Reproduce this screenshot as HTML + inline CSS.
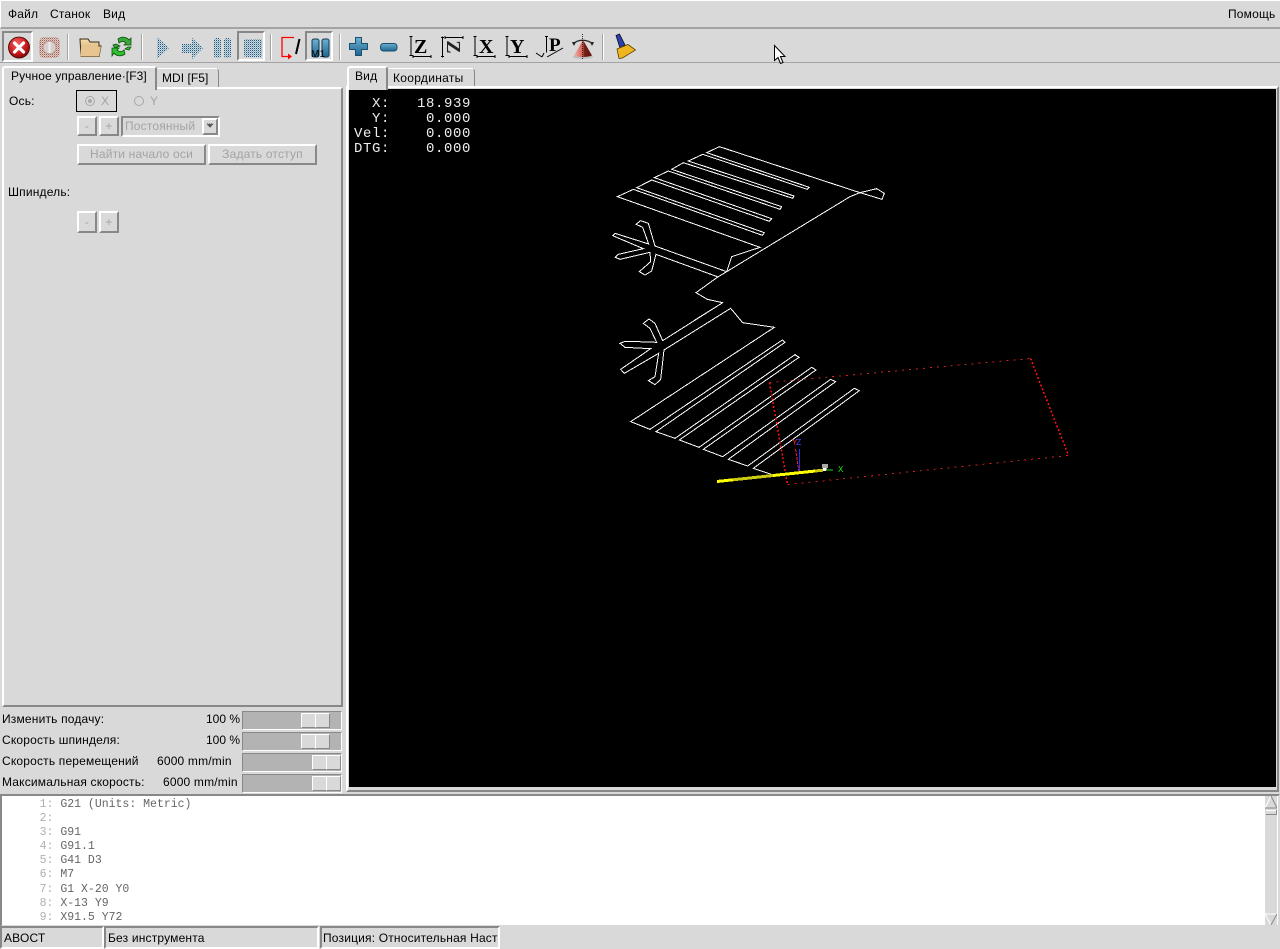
<!DOCTYPE html>
<html lang="ru"><head><meta charset="utf-8"><title>AXIS</title>
<style>
html,body{margin:0;padding:0;background:#d9d9d9;}
body{width:1280px;height:949px;overflow:hidden;position:relative;font:12px "Liberation Sans",sans-serif;letter-spacing:.18px;color:#000;}
.a{position:absolute;box-sizing:border-box;white-space:nowrap;}
.t{position:absolute;white-space:pre;line-height:14px;}
.btn{position:absolute;box-sizing:border-box;border:2px solid;border-color:#fff #888 #888 #fff;color:#a3a3a3;text-align:center;background:#d9d9d9;}
.sep{position:absolute;top:34px;width:2px;height:26px;background:linear-gradient(90deg,#a3a3a3 50%,#fff 50%);}
.tr{position:absolute;box-sizing:border-box;left:242px;width:100px;height:19px;background:#b3b3b3;border:1px solid;border-color:#888 #fff #fff #888;}
.th{position:absolute;box-sizing:border-box;top:1px;width:15px;height:15px;background:#d9d9d9;border:1px solid;border-color:#fff #888 #888 #fff;}
#code{position:absolute;left:12px;top:798px;font:11.5px/14.1px "Liberation Mono",monospace;letter-spacing:0;white-space:pre;color:#666;}
#code i{font-style:normal;color:#b0b0b0;}
#dro{position:absolute;left:354px;top:97px;font:14px/15px "Liberation Mono",monospace;letter-spacing:.6px;color:#eee;white-space:pre;}
</style></head><body>

<!-- menu -->
<div class="a" style="left:0;top:0;width:1280px;height:29px;border-top:1px solid #fff;border-left:1px solid #fff;border-bottom:2px solid #a3a3a3"></div>
<div class="t" style="left:8px;top:7px">Файл</div>
<div class="t" style="left:50px;top:7px">Станок</div>
<div class="t" style="left:103px;top:7px">Вид</div>
<div class="t" style="left:1228px;top:7px">Помощь</div>
<div class="a" style="left:0;top:62px;width:1280px;height:1px;background:#a3a3a3"></div>

<!-- toolbar -->
<div class="a" style="left:2px;top:31px;width:31px;height:31px;border:2px solid;border-color:#888 #fff #fff #888"></div>
<div class="a" style="left:237px;top:31px;width:28px;height:30px;border:2px solid;border-color:#888 #fff #fff #888"></div>
<div class="a" style="left:305px;top:31px;width:28px;height:30px;border:2px solid;border-color:#888 #fff #fff #888"></div>
<div class="sep" style="left:67px"></div><div class="sep" style="left:141px"></div><div class="sep" style="left:270px"></div><div class="sep" style="left:602px"></div>
<div class="sep" style="left:339px"></div>

<svg class="a" style="left:0;top:0" width="1280" height="64" viewBox="0 0 1280 64">
<defs>
<pattern id="chk" width="2" height="2" patternUnits="userSpaceOnUse"><rect width="2" height="2" fill="#d0d8dc"/><rect width="1" height="1" fill="#1d5a80"/><rect x="1" y="1" width="1" height="1" fill="#8fb0c4"/></pattern>
<pattern id="chkr" width="2" height="2" patternUnits="userSpaceOnUse"><rect width="2" height="2" fill="#d9d0cc"/><rect width="1" height="1" fill="#a5584c"/><rect x="1" y="1" width="1" height="1" fill="#c9a090"/></pattern>
<radialGradient id="rd" cx=".4" cy=".3" r=".8"><stop offset="0" stop-color="#f26060"/><stop offset=".6" stop-color="#c81818"/><stop offset="1" stop-color="#700"/></radialGradient>
<linearGradient id="fd" x1="0" y1="0" x2="0" y2="1"><stop offset="0" stop-color="#f5dcae"/><stop offset="1" stop-color="#c99c5e"/></linearGradient>
<linearGradient id="bl" x1="0" y1="0" x2="0" y2="1"><stop offset="0" stop-color="#6fb0d0"/><stop offset="1" stop-color="#1d6590"/></linearGradient>
<linearGradient id="cn" x1="0" y1="0" x2="1" y2="0"><stop offset="0" stop-color="#f5b0a8"/><stop offset=".5" stop-color="#d06058"/><stop offset=".55" stop-color="#7a2018"/><stop offset="1" stop-color="#5a100c"/></linearGradient>
</defs>
<!-- estop -->
<circle cx="19" cy="47.5" r="10.5" fill="url(#rd)" stroke="#300" stroke-width=".8"/>
<path d="M14.5 43l9 9M23.5 43l-9 9" stroke="#fff" stroke-width="3.2" stroke-linecap="round"/>
<!-- power -->
<rect x="39" y="37" width="21" height="21" rx="5" fill="url(#chkr)"/>
<circle cx="49.5" cy="47.5" r="6.500" fill="#d6cfcb" stroke="#b99"/><path d="M49.5 42v11" stroke="#eee" stroke-width="2"/>
<!-- folder -->
<path d="M80 39h8l2 3h9v4h2l-2 10.500H81z" fill="url(#fd)" stroke="#3a2a10"/>
<path d="M81 46.500h20l-2 10H80.500z" fill="#e8c58e"/>
<!-- reload -->
<path d="M118 39c4-3 9-2 11 1l2-2v7h-7l2-2c-2-2-5-2-7 0z" fill="#3aa83a" stroke="#0d520d" stroke-width=".8"/>
<path d="M113 45l3-1 4 2-5 2z" fill="#3aa83a" stroke="#0d520d" stroke-width=".8"/>
<path d="M125 54c-4 3-9 2-11-1l-2 3v-8h7l-2 2c2 2 5 2 7 0z" fill="#2fc02f" stroke="#0d520d" stroke-width=".8"/>
<path d="M131 47l-2 3-4-1 3-2z" fill="#2fc02f" stroke="#0d520d" stroke-width=".8"/>
<!-- play -->
<path d="M157 37l12 11-12 11z" fill="url(#chk)"/>
<!-- step -->
<path d="M182 44h10v-6l11 10-11 11v-6h-10z" fill="url(#chk)"/>
<!-- pause -->
<rect x="214" y="38" width="7" height="20" rx="2.500" fill="url(#chk)"/><rect x="224" y="38" width="7" height="20" rx="2.500" fill="url(#chk)"/>
<!-- stop -->
<rect x="244" y="39" width="18" height="18" rx="2" fill="url(#chk)"/>
<!-- block delete -->
<path d="M294 37.500h-12v19h9" fill="none" stroke="#f00" stroke-width="1.300"/><path d="M288 53.500l4 3-4 3z" fill="#f00"/>
<path d="M296 54l3.500-15" stroke="#000" stroke-width="2"/>
<!-- m1 -->
<rect x="312" y="39" width="7" height="18" rx="2" fill="url(#bl)" stroke="#0c3b55"/><rect x="322" y="39" width="7" height="18" rx="2" fill="url(#bl)" stroke="#0c3b55"/>
<text x="311" y="57" font-family="Liberation Sans,sans-serif" font-size="10" fill="#000">M1</text>
<!-- plus -->
<path d="M356 38h6v6h6v6h-6v6h-6v-6h-6v-6h6z" fill="url(#bl)" stroke="#184f70" stroke-linejoin="round" transform="translate(-.5,-.5)"/>
<!-- minus -->
<rect x="380.500" y="43.500" width="16.500" height="7.500" rx="3" fill="url(#bl)" stroke="#184f70"/>
<!-- view Z -->
<g fill="none" stroke="#000"><path d="M409.500 36.500h3M411 36.500v19M409.500 55.500h3M413 56.500h18M413 55v3M431 55v3"/></g>
<text x="414" y="53" font-family="Liberation Serif,serif" font-size="20" font-weight="700">Z</text>
<!-- view N (rotated Z) -->
<g fill="none" stroke="#000"><path d="M442.500 36.500v21M441 37.500h3M441 56.500h3M445 37.500h18M445 36v3M463 36v3"/></g>
<text transform="translate(453,47) rotate(90)" x="0" y="6" text-anchor="middle" font-family="Liberation Serif,serif" font-size="20" font-weight="700" fill="#222">Z</text>
<!-- view X -->
<g fill="none" stroke="#000"><path d="M473.500 36.500h3M475 36.500v19M473.500 55.500h3M477 56.500h18M477 55v3M495 55v3"/></g>
<text x="479" y="53" font-family="Liberation Serif,serif" font-size="20" font-weight="700">X</text>
<!-- view Y -->
<g fill="none" stroke="#000"><path d="M505.500 36.500h3M507 36.500v19M505.500 55.500h3M509 56.500h18M509 55v3M527 55v3"/></g>
<text x="510" y="53" font-family="Liberation Serif,serif" font-size="20" font-weight="700">Y</text>
<!-- view P -->
<g fill="none" stroke="#000"><path d="M546.500 36.500v16M545 36.500h3M536 53l6 4M542 57l2-4M547 57l16-9"/></g>
<text x="549" y="51" font-family="Liberation Serif,serif" font-size="19" font-weight="700">P</text>
<!-- rotate cone -->
<path d="M573 44c5-5 14-5 20 0" fill="none" stroke="#222" stroke-width="1.200"/><path d="M572 42l4 0-2 4zM594 42l-4 0 2 4z" fill="#222"/>
<ellipse cx="583" cy="56.500" rx="10" ry="2.500" fill="#aaa" opacity=".6"/>
<path d="M583 40l9 15.500c-5 2-13 2-18 0z" fill="url(#cn)"/>
<path d="M582.500 34v26" stroke="#000" stroke-width=".8" stroke-dasharray="1 1"/>
<!-- clear -->
<path d="M616 35.500l3.500-1.500 5.500 11-5 3z" fill="#2b3fb0" stroke="#111" stroke-width=".8"/>
<path d="M617 49l11-4.500 7.500 5.500-13 8-3.500.5z" fill="#eeb520" stroke="#5a4200" stroke-width=".8"/>
<!-- cursor -->
<path d="M774.500 45.500v15l3.500-3 2.500 6 2.500-1-2.500-6h4.500z" fill="#fff" stroke="#000"/>
</svg>

<!-- left tabs -->
<div class="a" style="left:2px;top:66px;width:155px;height:24px;border:2px solid;border-color:#fff #888 transparent #fff;border-top-left-radius:3px;border-top-right-radius:3px;background:#d9d9d9;z-index:2;border-bottom:0"></div>
<div class="t" style="left:11px;top:69px;z-index:3;letter-spacing:.09px">Ручное управление·[F3]</div>
<div class="a" style="left:157px;top:68px;width:62px;height:20px;border:1px solid;border-color:#fff #888 transparent transparent;border-top-right-radius:4px;"></div>
<div class="t" style="left:162px;top:71px;letter-spacing:.05px">MDI [F5]</div>

<!-- left panel -->
<div class="a" style="left:2px;top:87px;width:341px;height:620px;border:2px solid;border-color:#fff #888 #888 #fff;"></div>
<div class="a" style="left:4px;top:66px;width:151px;height:24px;background:#d9d9d9;z-index:1"></div>
<div class="t" style="left:9px;top:94px">Ось:</div>
<div class="a" style="left:76px;top:90px;width:41px;height:22px;border:1px solid #000"></div>
<svg class="a" style="left:80px;top:93px" width="70" height="16">
<circle cx="10" cy="8" r="4.500" fill="none" stroke="#a8a8a8"/><circle cx="10" cy="8" r="2" fill="#a8a8a8"/>
<circle cx="59" cy="8" r="4.500" fill="none" stroke="#a8a8a8"/></svg>
<div class="t" style="left:101px;top:94px;color:#a3a3a3">X</div>
<div class="t" style="left:150px;top:94px;color:#a3a3a3">Y</div>
<div class="btn" style="left:77px;top:116px;width:20px;height:20px;line-height:16px">-</div>
<div class="btn" style="left:99px;top:116px;width:20px;height:20px;line-height:16px">+</div>
<div class="a" style="left:121px;top:116px;width:99px;height:21px;border:2px solid;border-color:#888 #fff #fff #888;color:#a3a3a3;line-height:16px;padding-left:2px">Постоянный</div>
<div class="btn" style="left:202px;top:118px;width:16px;height:17px;"></div>
<svg class="a" style="left:204px;top:121px" width="12" height="10"><path d="M2 2.500h8l-4 4.500z" fill="#555" stroke="#fff" stroke-width=".5" stroke-dasharray="1 1"/></svg>
<div class="btn" style="left:77px;top:144px;width:129px;height:21px;line-height:17px">Найти начало оси</div>
<div class="btn" style="left:208px;top:144px;width:109px;height:21px;line-height:17px">Задать отступ</div>
<div class="t" style="left:8px;top:185px">Шпиндель:</div>
<div class="btn" style="left:77px;top:211px;width:20px;height:22px;line-height:18px">-</div>
<div class="btn" style="left:99px;top:211px;width:20px;height:22px;line-height:18px">+</div>

<!-- sliders -->
<div class="t" style="left:2px;top:712px">Изменить подачу:</div><div class="t" style="left:206px;top:712px;letter-spacing:0">100 %</div>
<div class="t" style="left:2px;top:733px">Скорость шпинделя:</div><div class="t" style="left:206px;top:733px;letter-spacing:0">100 %</div>
<div class="t" style="left:2px;top:754px">Скорость перемещений</div><div class="t" style="left:157px;top:754px">6000 mm/min</div>
<div class="t" style="left:2px;top:775px">Максимальная скорость:</div><div class="t" style="left:163px;top:775px">6000 mm/min</div>
<div class="tr" style="top:711px"><div class="th" style="left:58px"></div><div class="th" style="left:72px"></div></div>
<div class="tr" style="top:732px"><div class="th" style="left:58px"></div><div class="th" style="left:72px"></div></div>
<div class="tr" style="top:753px"><div class="th" style="left:69px"></div><div class="th" style="left:83px"></div></div>
<div class="tr" style="top:774px"><div class="th" style="left:69px"></div><div class="th" style="left:83px"></div></div>

<!-- right tabs -->
<div class="a" style="left:347px;top:66px;width:41px;height:24px;border:2px solid;border-color:#fff #888 transparent #fff;border-bottom:0;border-top-left-radius:3px;border-top-right-radius:3px;background:#d9d9d9;z-index:2"></div>
<div class="t" style="left:355px;top:69px;z-index:3">Вид</div>
<div class="a" style="left:388px;top:68px;width:87px;height:20px;border:1px solid;border-color:#fff #888 transparent transparent;border-top-right-radius:4px"></div>
<div class="t" style="left:393px;top:71px;letter-spacing:.3px">Координаты</div>

<!-- canvas frame -->
<div class="a" style="left:346px;top:86px;width:933px;height:706px;border:2px solid;border-color:#fff #888 #888 #fff"></div>
<div class="a" style="left:349px;top:89px;width:927px;height:698px;background:#000"></div>

<svg class="a" style="left:0;top:0" width="1280" height="800" viewBox="0 0 1280 800" shape-rendering="crispEdges">
<g fill="none" stroke="#fff" stroke-width="1">
<g transform="translate(600,140) scale(.33333)">
<polyline vector-effect="non-scaling-stroke" points="780,158 830,146 853,160 846,178 780,158 358,20 320,38 628,142 622,148 308,43 265,63 582,168 578,175 250,68 215,88 545,200 540,208 205,93 163,113 515,236 508,244 155,120 110,143 493,278 487,286 100,148 52,170 480,322 395,350 380,395 165,318 145,250 122,242 108,253 128,262 146,312 45,280 38,287 130,326 55,343 46,352 60,358 150,337 152,365 118,395 135,405 155,393 168,343 352,410"/>
<polyline vector-effect="non-scaling-stroke" points="780,158 750,170 380,395 352,412 288,458 322,478 368,488 285,540"/>
</g>
<g transform="translate(600,300) scale(.33333)">
<polyline vector-effect="non-scaling-stroke" points="368,8 188,122 165,70 147,57 130,70 150,85 170,127 115,125 75,124 60,130 75,142 152,146 62,208 73,220 176,160 165,230 145,242 165,254 182,238 192,150 392,25 428,68 523,82 92,365 150,388 547,120 555,127 168,395 225,415 585,164 597,172 238,420 297,442 635,202 648,210 310,448 368,470 692,238 707,245 385,478 443,498 763,265 778,272 460,505 520,525"/>
</g>
</g>
<!-- limits -->
<g fill="none" stroke-width="1" stroke-dasharray="2 5">
<path d="M769.500 382.500L1030.500 358.500M787.500 484.500L1068.500 455.500" stroke="#d02020"/>
</g>
<g fill="none" stroke-width="1.500" stroke-dasharray="2 2" stroke="#ff1010">
<path d="M769.500 382.500L787.500 484.500M1030.500 358.500L1068.500 455.500"/>
</g>
<!-- axes -->
<path d="M795.500 449L799 472" stroke="#f02020" stroke-dasharray="3 1"/>
<path d="M799.500 449v24" stroke="#2a2aff"/>
<path d="M824 470h9" stroke="#1ce01c"/>
<path d="M717 481.500L820 470.500" stroke="#ffff00" stroke-width="3"/>
<path d="M733 479.800L773 475.500M815 471L823 470.200" stroke="#caca10" stroke-width="3"/>
<path d="M822 464h6v4h-1v2h-4v-2h-1z" fill="#a8a8a8"/><rect x="823" y="468" width="3" height="3" fill="#fff"/>
<g font-family="Liberation Mono,monospace" font-size="9" shape-rendering="auto">
<text x="792" y="445" fill="#f02020">Y</text><text x="796" y="445" fill="#4040ff">Z</text><text x="838" y="472" fill="#1ce01c">X</text>
</g>
</svg>

<div id="dro">  X:   18.939
  Y:    0.000
Vel:    0.000
DTG:    0.000</div>

<!-- text area -->
<div class="a" style="left:0;top:794px;width:1280px;height:133px;background:#fff;border:2px solid;border-color:#888 #d9d9d9 #d9d9d9 #888"></div>
<div id="code"><i>    1:</i> G21 (Units: Metric)
<i>    2:</i>
<i>    3:</i> G91
<i>    4:</i> G91.1
<i>    5:</i> G41 D3
<i>    6:</i> M7
<i>    7:</i> G1 X-20 Y0
<i>    8:</i> X-13 Y9
<i>    9:</i> X91.5 Y72</div>
<div class="a" style="left:1265px;top:796px;width:12px;height:129px;background:#d9d9d9"></div>
<svg class="a" style="left:1265px;top:796px" width="12" height="129">
<path d="M6 0L12 12H0z" fill="#d9d9d9"/><path d="M6 0L0 12" stroke="#fff"/><path d="M6 0L12 12M0 12H12" stroke="#888"/>
<path d="M0 14h12v5H0z" fill="#d9d9d9"/><path d="M1 14.500h11" stroke="#fff"/><path d="M1 18.500h11M11.500 14v5" stroke="#888"/>
<path d="M0 118h12L6 129z" fill="#d9d9d9"/><path d="M0 118L6 129M0 118H12" stroke="#fff"/><path d="M12 118L6 129" stroke="#888"/>
</svg>

<!-- status bar -->
<div class="a" style="left:0;top:926px;width:104px;height:23px;border:2px solid;border-color:#888 #fff #fff #888;line-height:20px;padding-left:2px">АВОСТ</div>
<div class="a" style="left:104px;top:926px;width:215px;height:23px;border:2px solid;border-color:#888 #fff #fff #888;line-height:20px;padding-left:2px">Без инструмента</div>
<div class="a" style="left:320px;top:926px;width:180px;height:23px;border:2px solid;border-color:#888 #fff #fff #888;line-height:20px;padding-left:1px;overflow:hidden">Позиция: Относительная Настоящая</div>
</body></html>
